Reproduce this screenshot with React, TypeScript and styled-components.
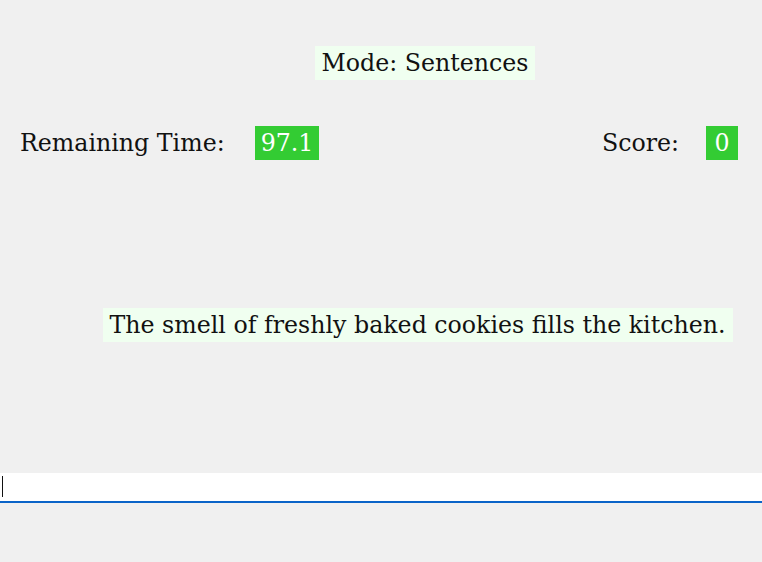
import * as React from 'react'
import styled, { createGlobalStyle } from 'styled-components'

const Global = createGlobalStyle`
  html, body {
    margin: 0;
    padding: 0;
    background: #f0f0f0;
  }
  body {
    font-family: 'DejaVu Serif', 'Liberation Serif', serif;
    color: #111;
  }
`

const Page = styled.div`
  display: flex;
  flex-direction: column;
  height: 562px;
`

const Header = styled.div`
  display: flex;
  justify-content: center;
  padding: 46px 0 0 88px;
`

const Highlight = styled.span`
  background: #f0fff0;
  font-size: 23.7px;
  line-height: 34px;
  padding: 0 7px;
`

const Stats = styled.div`
  display: flex;
  justify-content: space-between;
  align-items: center;
  margin-top: 46px;
  padding: 0 24px 0 20px;
`

const Stat = styled.div<{ $gap: number }>`
  display: flex;
  align-items: center;
  gap: ${p => p.$gap}px;
  font-size: 23.7px;
`

const Badge = styled.span`
  background: #33cc33;
  color: #fff;
  line-height: 34px;
  padding: 0 6px;
  min-width: 20px;
  text-align: center;
`

const Prompt = styled.div`
  display: flex;
  justify-content: center;
  padding-left: 73px;
  margin-top: 148px;
`

const Field = styled.div`
  position: relative;
  margin-top: 131px;
`

const Entry = styled.input`
  display: block;
  width: 100%;
  box-sizing: border-box;
  height: 30px;
  border: none;
  border-bottom: 2px solid #0a64c8;
  background: #fff;
  outline: none;
  font-size: 20px;
  padding: 0 2px;
`

const Caret = styled.span`
  position: absolute;
  left: 2px;
  top: 3px;
  width: 1px;
  height: 21px;
  background: #111;
`

export default function App() {
  return (
    <Page>
      <Global />
      <Header>
        <Highlight>Mode: Sentences</Highlight>
      </Header>
      <Stats>
        <Stat $gap={30}>
          Remaining Time:
          <Badge>97.1</Badge>
        </Stat>
        <Stat $gap={27}>
          Score:
          <Badge>0</Badge>
        </Stat>
      </Stats>
      <Prompt>
        <Highlight>The smell of freshly baked cookies fills the kitchen.</Highlight>
      </Prompt>
      <Field>
        <Entry type="text" />
        <Caret />
      </Field>
    </Page>
  )
}
